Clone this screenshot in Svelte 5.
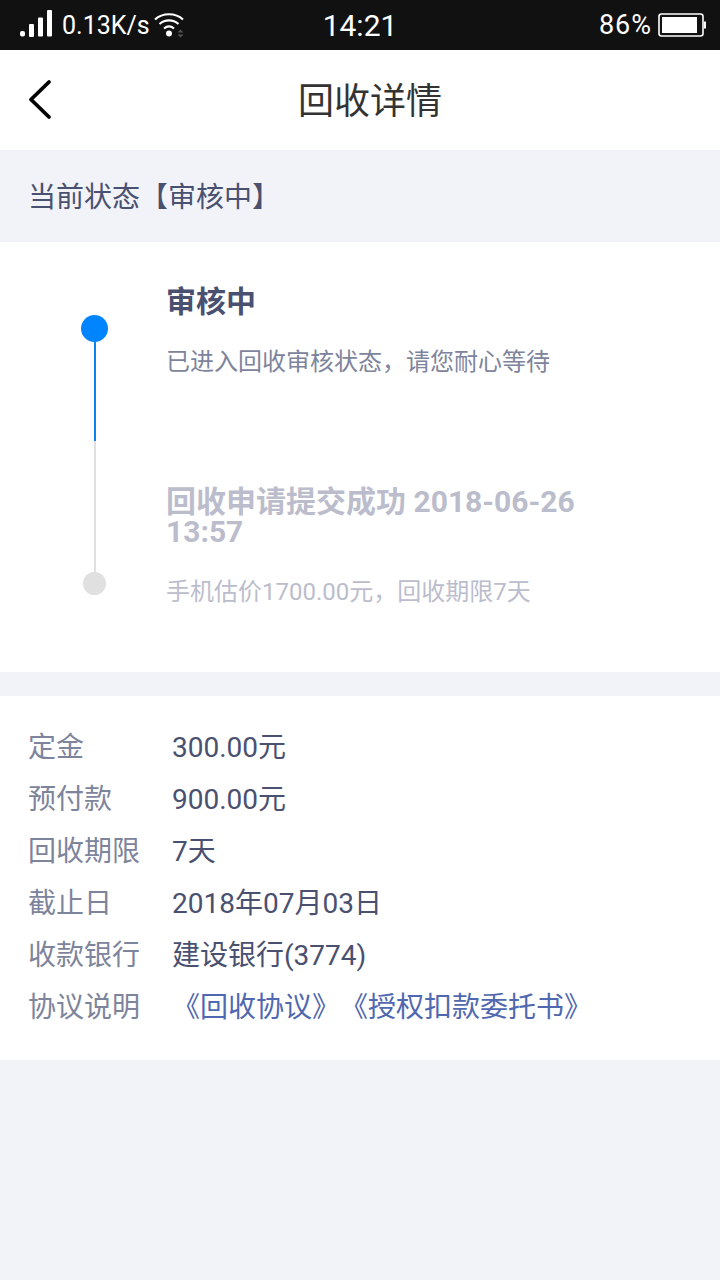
<script lang="ts">
	const ROWS = [
		{ label: '定金', value: '300.00元' },
		{ label: '预付款', value: '900.00元' },
		{ label: '回收期限', value: '7天' },
		{ label: '截止日', value: '2018年07月03日' },
		{ label: '收款银行', value: '建设银行(3774)' }
	];
</script>

<div class="page">
	<header class="status">
		<div class="left">
			<svg class="signal" width="32" height="28" viewBox="0 0 32 28" aria-hidden="true">
				<rect x="0" y="21" width="5" height="5.500" rx="2" fill="#fff" />
				<rect x="9" y="14" width="5" height="13" rx="1" fill="#fff" />
				<rect x="18" y="7.500" width="5" height="19" rx="1" fill="#fff" />
				<rect x="27" y="0" width="5" height="26.500" rx="1" fill="#fff" />
			</svg>
			<span class="speed">0.13K/s</span>
			<svg class="wifi" width="30" height="26" viewBox="0 0 30 26" aria-hidden="true">
				<path d="M1 7.500C8.500 .5 21.500 .5 29 7.500" fill="none" stroke="#fff" stroke-width="2.200" />
				<path d="M5.500 12C11 7.200 19 7.200 24.500 12" fill="none" stroke="#fff" stroke-width="2.200" />
				<path d="M10 16.500C13 14 17 14 20 16.500" fill="none" stroke="#fff" stroke-width="2.200" />
				<circle cx="15" cy="21.500" r="3" fill="#fff" />
				<path d="M23.500 20.500h6l-3-3zM23.500 22.500h6l-3 3z" fill="#555" />
			</svg>
		</div>
		<span class="clock">14:21</span>
		<div class="right">
			<span class="pct">86%</span>
			<svg width="48" height="24" viewBox="0 0 48 24" aria-hidden="true">
				<rect x="1" y="1" width="44" height="22" rx="2.500" fill="none" stroke="#fff" stroke-width="1.600" />
				<rect x="4" y="4" width="35" height="16" fill="#fff" />
				<rect x="46" y="8.500" width="2" height="7" fill="#fff" />
			</svg>
		</div>
	</header>

	<nav class="bar">
		<button type="button" class="back" aria-label="back">
			<svg width="26" height="42" viewBox="0 0 26 42" aria-hidden="true">
				<path d="M22 3 4 20.500 22 38" fill="none" stroke="#000" stroke-width="3.800" stroke-linecap="round" stroke-linejoin="round" />
			</svg>
		</button>
		<h1>回收详情</h1>
	</nav>

	<div class="current">当前状态【审核中】</div>

	<section class="timeline">
		<div class="rail">
			<span class="dot active"></span>
			<span class="line active"></span>
			<span class="line"></span>
			<span class="dot"></span>
		</div>
		<div class="steps">
			<div class="step first">
				<h2>审核中</h2>
				<p>已进入回收审核状态，请您耐心等待</p>
			</div>
			<div class="step done">
				<h2>回收申请提交成功 2018-06-26 13:57</h2>
				<p>手机估价1700.00元，回收期限7天</p>
			</div>
		</div>
	</section>

	<section class="info">
		{#each ROWS as row (row.label)}
			<div class="row">
				<span class="label">{row.label}</span>
				<span class="value">{row.value}</span>
			</div>
		{/each}
		<div class="row">
			<span class="label">协议说明</span>
			<span class="value links">《回收协议》《授权扣款委托书》</span>
		</div>
	</section>
</div>

<style>
	:global(body) {
		margin: 0;
		background: #f1f3f8;
	}
	.page {
		display: flex;
		flex-direction: column;
		min-height: 1280px;
		background: #f1f3f8;
		font-family: Roboto, "Noto Sans CJK SC", sans-serif;
		text-spacing-trim: space-all;
	}
	.status {
		display: grid;
		grid-template-columns: 1fr auto 1fr;
		align-items: center;
		height: 50px;
		padding: 0 14px 0 20px;
		background: #111;
		color: #fff;
	}
	.left,
	.right {
		display: flex;
		align-items: center;
	}
	.right {
		justify-content: flex-end;
		gap: 6px;
	}
	.signal {
		margin: -2px 10px 0 0;
	}
	.speed {
		font-size: 25px;
	}
	.wifi {
		margin-left: 4px;
	}
	.clock {
		font-size: 30px;
		margin-right: 6px;
	}
	.pct {
		font-size: 27px;
		letter-spacing: 1px;
	}
	.bar {
		position: relative;
		display: flex;
		align-items: center;
		justify-content: center;
		height: 100px;
		background: #fff;
	}
	.back {
		position: absolute;
		left: 27px;
		top: 29px;
		padding: 0;
		border: 0;
		background: none;
		line-height: 0;
	}
	h1 {
		margin: -4px 0 0 20px;
		font-size: 36px;
		font-weight: 400;
		color: #333;
	}
	.current {
		height: 92px;
		padding-left: 28px;
		font-size: 28px;
		line-height: 96px;
		color: #4a5070;
	}
	.timeline {
		display: flex;
		height: 430px;
		background: #fff;
	}
	.rail {
		display: flex;
		flex-direction: column;
		align-items: center;
		width: 189px;
		margin-right: -23px;
		padding-top: 73px;
		box-sizing: border-box;
	}
	.dot {
		flex: none;
		width: 23px;
		height: 23px;
		border-radius: 50%;
		background: #e0e0e0;
	}
	.dot.active {
		width: 27px;
		height: 27px;
		background: #0084ff;
	}
	.line {
		flex: none;
		width: 2px;
		height: 131px;
		background: #e0e0e0;
	}
	.line.active {
		height: 99px;
		background: #0a84f0;
	}
	.steps {
		flex: 1;
		min-width: 0;
		padding-right: 130px;
	}
	.step h2 {
		margin: 0;
		font-size: 30px;
		line-height: 30px;
		font-weight: 700;
		color: #4a5070;
	}
	.step p {
		margin: 29px 0 0;
		font-size: 24px;
		line-height: 32px;
		color: #7d849c;
	}
	.step.first {
		padding-top: 45px;
		height: 199px;
		box-sizing: border-box;
	}
	.step.done {
		padding-top: 46px;
	}
	.step.done h2,
	.step.done p {
		color: #bbbdcc;
	}
	.info {
		margin-top: 24px;
		padding: 26px 0 26px 28px;
		background: #fff;
	}
	.row {
		display: flex;
		align-items: center;
		height: 52px;
		font-size: 28px;
		line-height: 52px;
		color: #4a5070;
	}
	.label {
		flex: none;
		width: 144px;
		color: #7d849c;
	}
	.links {
		color: #5068b0;
	}
</style>
